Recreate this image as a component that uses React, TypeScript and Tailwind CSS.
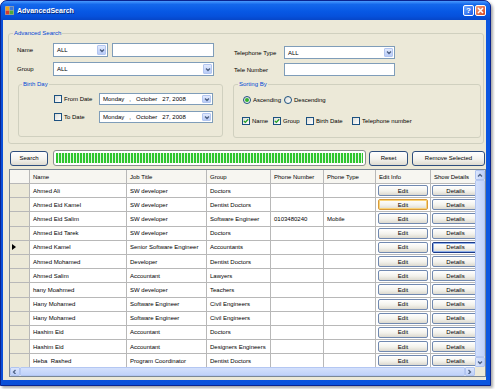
import React from "react";

function Chevron({ dir = "down" }: { dir?: "down" | "up" | "left" | "right" }) {
  const d =
    dir === "down"
      ? "M1 1.5 L3 3.5 L5 1.5"
      : dir === "up"
      ? "M1 3.5 L3 1.5 L5 3.5"
      : dir === "left"
      ? "M3.5 1 L1.5 3 L3.5 5"
      : "M1.5 1 L3.5 3 L1.5 5";
  return (
    <svg width="6" height="5" viewBox="0 0 6 5" className="block">
      <path d={d} stroke="#4d6185" strokeWidth="1.3" fill="none" />
    </svg>
  );
}

function DropBtn() {
  return (
    <div className="w-[9px] my-[1px] mr-[1px] rounded-[1px] border border-[#b3c6f0] bg-[linear-gradient(180deg,#e2eafd,#b9ccf8)] flex items-center justify-center shrink-0">
      <Chevron />
    </div>
  );
}

function Combo({ text, className }: { text: string; className: string }) {
  return (
    <div className={"flex items-stretch bg-white border border-[#7f9db9] shrink-0 " + className}>
      <span className="flex-1 pl-[3px] flex items-center whitespace-pre">{text}</span>
      <DropBtn />
    </div>
  );
}

function TextBox({ className }: { className: string }) {
  return <div className={"bg-white border border-[#7f9db9] shrink-0 " + className} />;
}

function Check({ checked }: { checked?: boolean }) {
  return (
    <span className="w-[8px] h-[8px] border border-[#1c5180] bg-[linear-gradient(135deg,#dcdcd6,#ffffff)] flex items-center justify-center shrink-0">
      {checked && (
        <svg width="6" height="6" viewBox="0 0 6 6" className="block">
          <path d="M0.8 2.9 L2.3 4.4 L5.2 1.2" stroke="#21a121" strokeWidth="1.3" fill="none" />
        </svg>
      )}
    </span>
  );
}

function Radio({ on }: { on?: boolean }) {
  return (
    <span className="w-[8px] h-[8px] rounded-full border border-[#1c5180] bg-[linear-gradient(135deg,#dcdcd6,#ffffff)] flex items-center justify-center shrink-0">
      {on && <span className="w-[4px] h-[4px] rounded-full bg-[#2fb22f]" />}
    </span>
  );
}

function XPButton({ text, className }: { text: string; className: string }) {
  return (
    <div
      className={
        "rounded-[3px] border border-[#2f4f7f] bg-[linear-gradient(180deg,#ffffff_0%,#f4f3ee_55%,#dedbd0_100%)] flex items-center justify-center shrink-0 " +
        className
      }
    >
      {text}
    </div>
  );
}

const rows: [string, string, string, string, string][] = [
  ["Ahmed Ali", "SW developer", "Doctors", "", ""],
  ["Ahmed Eid Kamel", "SW developer", "Dentist Doctors", "", ""],
  ["Ahmed Eid Salim", "SW developer", "Software Engineer", "0103480240", "Mobile"],
  ["Ahmed Eid Tarek", "SW developer", "Doctors", "", ""],
  ["Ahmed Kamel", "Senior Software Engineer", "Accountants", "", ""],
  ["Ahmed Mohamed", "Developer", "Dentist Doctors", "", ""],
  ["Ahmed Salim", "Accountant", "Lawyers", "", ""],
  ["hany Moahmed", "SW developer", "Teachers", "", ""],
  ["Hany Mohamed", "Software Engineer", "Civil Engineers", "", ""],
  ["Hany Mohamed", "Software Engineer", "Civil Engineers", "", ""],
  ["Hashim Eid", "Accountant", "Doctors", "", ""],
  ["Hashim Eid", "Accountant", "Designers Engineers", "", ""],
  ["Heba  Rashed", "Program Coordinator", "Dentist Doctors", "", ""],
];

const colW = ["w-[97px]", "w-[80px]", "w-[64px]", "w-[53px]", "w-[52px]"];
const headers = ["Name", "Job Title", "Group", "Phone Number", "Phone Type"];

const cell =
  "h-full shrink-0 border-r border-[#b8b8b8] flex items-center pl-[3px] overflow-hidden whitespace-pre";

function GridButton({ text, state }: { text: string; state?: "hover" | "focus" }) {
  const b =
    state === "hover"
      ? "border-[#d89a3a] shadow-[inset_0_0_0_1px_#f8d37a]"
      : state === "focus"
      ? "border-[#1b3a8a] shadow-[inset_0_0_0_1px_#8fb0ea]"
      : "border-[#7189b0]";
  return (
    <div
      className={
        "w-full h-[11px] rounded-[2px] border bg-[linear-gradient(180deg,#ffffff_0%,#f3f2ec_55%,#dcd9cf_100%)] flex items-center justify-center " +
        b
      }
    >
      {text}
    </div>
  );
}

function AppIcon() {
  return (
    <svg width="9" height="9" viewBox="0 0 9 9" className="block shrink-0">
      <rect x="0" y="0" width="9" height="9" fill="#f4f4f4" />
      <rect x="0.5" y="0.5" width="4" height="4" fill="#e8a21c" />
      <rect x="4.5" y="0.5" width="4" height="4" fill="#3c78d8" />
      <rect x="0.5" y="4.5" width="4" height="4" fill="#d83c2c" />
      <rect x="4.5" y="4.5" width="4" height="4" fill="#4caa3c" />
      <rect x="0" y="0" width="9" height="9" fill="none" stroke="#555" strokeWidth="0.6" />
    </svg>
  );
}

export default function App() {
  return (
    <div className="w-[495px] h-[389px] bg-white overflow-hidden font-['Liberation_Sans',Arial,sans-serif] text-[6px] leading-[8px] text-black">
      <div className="w-[491px] h-[386px] flex flex-col rounded-t-[7px] border border-[#0a2490] bg-[#0a4fd8] shadow-[2px_2px_3px_rgba(0,0,0,0.35)]">
        {/* Title bar */}
        <div className="h-[19px] shrink-0 flex items-center rounded-t-[6px] bg-[linear-gradient(180deg,#4a9bff_0%,#1468ec_18%,#0758e4_55%,#0651dc_80%,#0646c8_100%)] pl-[4px] pr-[4px]">
          <AppIcon />
          <span className="ml-[3px] text-white font-bold text-[7px] leading-[10px] [text-shadow:1px_1px_0_#0a2a78]">
            AdvancedSearch
          </span>
          <div className="flex-1" />
          <div className="w-[11px] h-[11px] rounded-[2px] border border-white bg-[linear-gradient(135deg,#6ea6ff,#1a5ae8)] flex items-center justify-center text-white font-bold text-[8px] leading-[8px]">
            ?
          </div>
          <div className="ml-[1px] w-[11px] h-[11px] rounded-[2px] border border-white bg-[linear-gradient(135deg,#f0a080,#d8461c)] flex items-center justify-center">
            <svg width="7" height="7" viewBox="0 0 7 7" className="block">
              <path d="M1 1 L6 6 M6 1 L1 6" stroke="white" strokeWidth="1.5" />
            </svg>
          </div>
        </div>

        {/* Frame body */}
        <div className="flex-1 flex pl-[2px] pr-[4px] pb-[5px] bg-[linear-gradient(90deg,#0a4fd8,#0b56e0)]">
          <div className="flex-1 bg-[#ece9d8] flex flex-col pt-[9px]">
            {/* Advanced Search group */}
            <fieldset className="ml-[5px] w-[476px] border border-[#d0d0bf] rounded-[3px] flex pb-[5px]">
              <legend className="ml-[4px] px-[1px] text-[#0046d5] leading-[8px]">Advanced Search</legend>
              {/* Left column */}
              <div className="w-[214px] flex flex-col">
                <div className="mt-[6px] h-[14px] flex items-center">
                  <span className="w-[44px] pl-[8px] shrink-0">Name</span>
                  <Combo text="ALL" className="w-[55px] h-[14px]" />
                  <TextBox className="ml-[4px] w-[102px] h-[14px]" />
                </div>
                <div className="mt-[5px] h-[14px] flex items-center">
                  <span className="w-[44px] pl-[8px] shrink-0">Group</span>
                  <Combo text="ALL" className="w-[161px] h-[14px]" />
                </div>
                <fieldset className="mt-[4px] ml-[9px] w-[205px] border border-[#d0d0bf] rounded-[3px] pb-[13px]">
                  <legend className="ml-[3px] px-[1px] text-[#0046d5] leading-[8px]">Birth Day</legend>
                  <div className="mt-[5px] h-[12px] flex items-center pl-[35px]">
                    <div className="w-[45px] flex items-center shrink-0">
                      <Check />
                      <span className="ml-[2px]">From Date</span>
                    </div>
                    <Combo text={"Monday   ,   October   27, 2008"} className="w-[114px] h-[12px]" />
                  </div>
                  <div className="mt-[6px] h-[12px] flex items-center pl-[35px]">
                    <div className="w-[45px] flex items-center shrink-0">
                      <Check />
                      <span className="ml-[2px]">To Date</span>
                    </div>
                    <Combo text={"Monday   ,   October   27, 2008"} className="w-[114px] h-[12px]" />
                  </div>
                </fieldset>
              </div>
              {/* Right column */}
              <div className="ml-[9px] flex flex-col">
                <div className="mt-[9px] h-[13px] flex items-center">
                  <span className="w-[52px] pl-[2px] shrink-0">Telephone Type</span>
                  <Combo text="ALL" className="w-[111px] h-[13px]" />
                </div>
                <div className="mt-[4px] h-[13px] flex items-center">
                  <span className="w-[52px] pl-[2px] shrink-0">Tele Number</span>
                  <TextBox className="w-[111px] h-[13px]" />
                </div>
                <fieldset className="mt-[4px] ml-[1px] w-[248px] border border-[#d0d0bf] rounded-[3px] pb-[12px]">
                  <legend className="ml-[4px] px-[1px] text-[#0046d5] leading-[8px]">Sorting By</legend>
                  <div className="mt-[8px] h-[8px] flex items-center pl-[9px]">
                    <div className="w-[41px] flex items-center shrink-0">
                      <Radio on />
                      <span className="ml-[2px]">Ascending</span>
                    </div>
                    <Radio />
                    <span className="ml-[2px]">Descending</span>
                  </div>
                  <div className="mt-[13px] h-[8px] flex items-center pl-[8px]">
                    <div className="w-[31px] flex items-center shrink-0">
                      <Check checked />
                      <span className="ml-[2px]">Name</span>
                    </div>
                    <div className="w-[33px] flex items-center shrink-0">
                      <Check checked />
                      <span className="ml-[2px]">Group</span>
                    </div>
                    <div className="w-[46px] flex items-center shrink-0">
                      <Check />
                      <span className="ml-[2px]">Birth Date</span>
                    </div>
                    <div className="flex items-center shrink-0">
                      <Check />
                      <span className="ml-[2px]">Telephone number</span>
                    </div>
                  </div>
                </fieldset>
              </div>
            </fieldset>

            {/* Button row */}
            <div className="mt-[6px] h-[16px] flex items-center pl-[7px]">
              <XPButton text="Search" className="w-[38px] h-[15px]" />
              <div className="ml-[5px] w-[313px] h-[16px] rounded-[3px] border border-[#8e8f8f] bg-white p-[2px] shrink-0">
                <div className="h-full bg-[repeating-linear-gradient(90deg,#2fc62f_0px,#2fc62f_2px,#dff5df_2px,#dff5df_3px)]" />
              </div>
              <XPButton text="Reset" className="ml-[3px] w-[39px] h-[15px]" />
              <XPButton text="Remove Selected" className="ml-[4px] w-[73px] h-[15px]" />
            </div>

            {/* Grid */}
            <div className="mt-[3px] ml-[6px] w-[477px] h-[208px] border border-[#7a8796] bg-[#ababab] flex flex-col">
              <div className="h-[197px] flex">
                <div className="flex-1 overflow-hidden bg-white flex flex-col">
                  {/* header */}
                  <div className="h-[14px] shrink-0 flex border-b border-[#b8b8b8] bg-[#f7f6f1]">
                    <div className="w-[20px] h-full shrink-0 border-r border-[#b8b8b8]" />
                    {headers.map((h, i) => (
                      <div key={h} className={cell + " " + colW[i]}>
                        {h}
                      </div>
                    ))}
                    <div className={cell + " w-[55px]"}>Edit Info</div>
                    <div className={cell + " w-[50px]"}>Show Details</div>
                  </div>
                  {rows.map((r, ri) => (
                    <div key={ri} className="h-[14.2px] shrink-0 flex border-b border-[#b8b8b8]">
                      <div className="w-[20px] h-full shrink-0 border-r border-[#b8b8b8] bg-[#ece9d8] flex items-center pl-[2px]">
                        {ri === 4 && (
                          <svg width="4" height="6" viewBox="0 0 4 6" className="block">
                            <path d="M0 0 L4 3 L0 6 Z" fill="#000" />
                          </svg>
                        )}
                      </div>
                      {r.map((v, ci) => (
                        <div key={ci} className={cell + " " + colW[ci]}>
                          {v}
                        </div>
                      ))}
                      <div className="w-[55px] h-full shrink-0 border-r border-[#b8b8b8] flex items-center px-[2px]">
                        <GridButton text="Edit" state={ri === 1 ? "hover" : undefined} />
                      </div>
                      <div className="w-[50px] h-full shrink-0 border-r border-[#b8b8b8] flex items-center px-[1px]">
                        <GridButton text="Details" state={ri === 4 ? "focus" : undefined} />
                      </div>
                    </div>
                  ))}
                </div>
                {/* vertical scrollbar */}
                <div className="w-[10px] shrink-0 flex flex-col bg-[#f3f1ea]">
                  <div className="h-[10px] shrink-0 rounded-[1px] border border-[#b0c4f0] bg-[linear-gradient(90deg,#dbe5fc,#bccff8)] flex items-center justify-center">
                    <Chevron dir="up" />
                  </div>
                  <div className="flex-1 rounded-[1px] border border-[#b4c7f2] bg-[linear-gradient(90deg,#d3e0fc,#c0d2fa)]" />
                  <div className="h-[10px] shrink-0 rounded-[1px] border border-[#b0c4f0] bg-[linear-gradient(90deg,#dbe5fc,#bccff8)] flex items-center justify-center">
                    <Chevron dir="down" />
                  </div>
                </div>
              </div>
              {/* horizontal scrollbar */}
              <div className="h-[10px] flex">
                <div className="flex-1 flex bg-[#f3f1ea]">
                  <div className="w-[10px] shrink-0 rounded-[1px] border border-[#b0c4f0] bg-[linear-gradient(180deg,#dbe5fc,#bccff8)] flex items-center justify-center">
                    <Chevron dir="left" />
                  </div>
                  <div className="flex-1 rounded-[1px] border border-[#b4c7f2] bg-[linear-gradient(180deg,#d3e0fc,#c0d2fa)]" />
                  <div className="w-[10px] shrink-0 rounded-[1px] border border-[#b0c4f0] bg-[linear-gradient(180deg,#dbe5fc,#bccff8)] flex items-center justify-center">
                    <Chevron dir="right" />
                  </div>
                </div>
                <div className="w-[10px] shrink-0 bg-[#ece9d8]" />
              </div>
            </div>
          </div>
        </div>
      </div>
    </div>
  );
}
